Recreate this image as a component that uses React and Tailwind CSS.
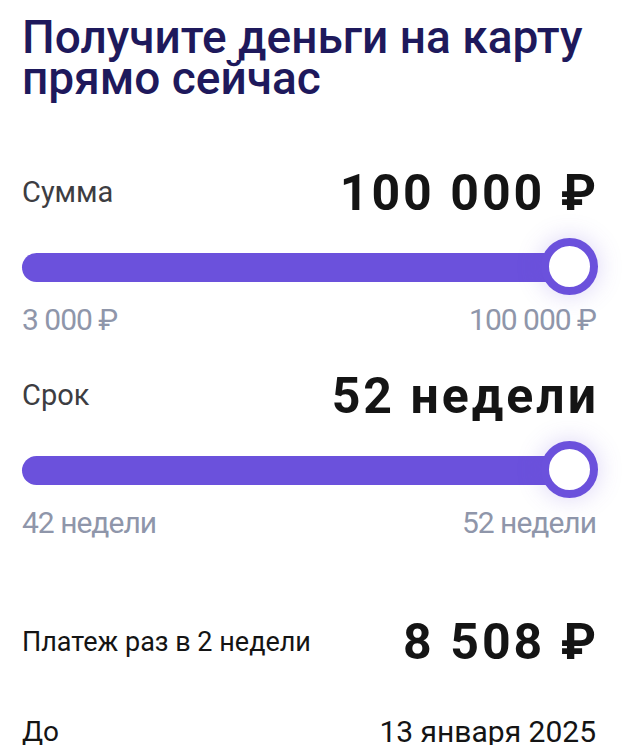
const roboto = { fontFamily: 'Roboto, "Liberation Sans", sans-serif' };

function Slider() {
  return (
    <div className="relative flex h-[60px] items-center">
      <div className="h-[29px] w-full rounded-full bg-[#6b51dc]" />
      <div className="absolute right-[-2px] top-[1px] h-[57px] w-[57px] rounded-full border-[8px] border-[#6b51dc] bg-white shadow-[0_0_24px_rgba(107,81,220,0.25)]" />
    </div>
  );
}

function Block({ label, value, min, max }) {
  return (
    <div>
      <div className="flex items-center justify-between">
        <span className="text-[29px] text-[#3d3d42]" style={roboto}>{label}</span>
        <span className="mr-[-3px] text-[50px] font-bold leading-none tracking-[3px] text-[#141414]" style={roboto}>{value}</span>
      </div>
      <div className="mt-[19px]">
        <Slider />
      </div>
      <div className="mt-[5px] flex justify-between text-[30px] leading-[36px] tracking-[-1px] text-[#8f96aa]" style={roboto}>
        <span>{min}</span>
        <span>{max}</span>
      </div>
    </div>
  );
}

export default function App() {
  return (
    <div className="h-[745px] overflow-hidden bg-white pl-[22px] pr-[44px]">
      <h1 className="pt-[17px] text-[46px] font-medium leading-[41px] text-[#1e195c]" style={roboto}>
        Получите деньги на карту прямо сейчас
      </h1>
      <div className="mt-[69px]">
        <Block label="Сумма" value="100 000 ₽" min="3 000 ₽" max="100 000 ₽" />
      </div>
      <div className="mt-[33px]">
        <Block label="Срок" value="52 недели" min="42 недели" max="52 недели" />
      </div>
      <div className="mt-[76px] flex items-center justify-between">
        <span className="text-[27px] text-[#141414]" style={roboto}>Платеж раз в 2 недели</span>
        <span className="mr-[-3px] text-[50px] font-bold leading-none tracking-[3px] text-[#141414]" style={roboto}>8 508 ₽</span>
      </div>
      <div className="mt-[50px] flex items-center justify-between">
        <span className="text-[28px] leading-none text-[#141414]" style={roboto}>До</span>
        <span className="text-[30px] leading-none text-[#141414]" style={roboto}>13 января 2025</span>
      </div>
    </div>
  );
}
